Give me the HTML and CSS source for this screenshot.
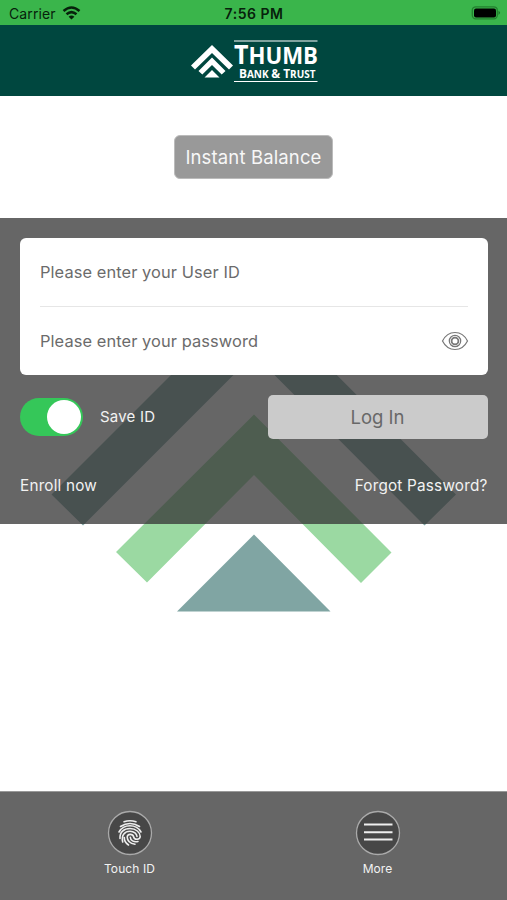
FILE: index.html
```html
<!DOCTYPE html>
<html lang="en">
<head>
<meta charset="utf-8">
<title>Thumb Bank &amp; Trust</title>
<link rel="stylesheet" href="styles.css">
</head>
<body>
<div class="app">
  <svg class="backdrop" viewBox="0 0 507 900" aria-hidden="true">
    <path fill="#80a5a3" d="M254 292 51.500 494.500 83 525.500 254 354.500 424.500 525.500 456 494.500ZM254 534.500 177 611.500H330.500Z"/>
    <path fill="#9bd9a2" d="M254 414.500 116 552 147 582.500 254 475 361 583 391.500 552.500Z"/>
  </svg>
  <div class="status">
    <div class="carrier"><span>Carrier</span>
      <svg width="19" height="14" viewBox="0 0 18 14" fill="none" stroke="#07210b" stroke-width="2.500"><path d="M1 5Q9-2 17 5M4 8.300Q9 3.900 14 8.300"/><path fill="#07210b" stroke="none" d="M9 13.600 6.100 10.700Q9 8.300 11.900 10.700Z"/></svg>
    </div>
    <span class="clock">7:56 PM</span>
    <svg class="battery" width="30" height="14" viewBox="0 0 29 14"><rect x=".8" y=".8" width="25" height="12" rx="3.500" fill="none" stroke="#23802f" stroke-width="1.300"/><rect x="2.500" y="2.500" width="22" height="9" rx="2" fill="#000"/><path d="M27 4.800Q30 6.800 27 9Z" fill="#1c7329"/></svg>
  </div>
  <header class="header">
    <svg width="128" height="44" viewBox="0 0 128 44" fill="#fff">
      <path d="M22 6 1 26.500 5 30.500 22 14 39 30.500 43 26.500ZM22 18.500 8.500 32 12.300 35.500 22 26 31.700 35.500 35.500 32ZM22 31 14.500 38.500H29.500Z"/>
      <path d="M44 1.500H127.500V2.400H44ZM44 42H127.500V42.900H44Z"/>
      <g class="wordmark">
        <text x="44" y="25" textLength="84" lengthAdjust="spacingAndGlyphs"><tspan font-size="27">T</tspan><tspan font-size="24">HUMB</tspan></text>
        <text x="49" y="38.500" textLength="76.500" lengthAdjust="spacingAndGlyphs"><tspan font-size="12.500">B</tspan><tspan font-size="10.500">ANK </tspan><tspan font-size="12.500">&amp; T</tspan><tspan font-size="10.500">RUST</tspan></text>
      </g>
    </svg>
  </header>
  <section class="hero"><button class="balance">Instant Balance</button></section>
  <main class="login">
    <div class="card">
      <div class="field"><span class="user">Please enter your User ID</span></div>
      <div class="field"><span class="pass">Please enter your password</span>
        <svg width="28" height="20" viewBox="0 0 28 20" fill="none" stroke="#777"><path stroke-width="1.200" d="M1.500 10C4.500 4 9 1.500 14 1.500S23.500 4 26.500 10C23.500 16 19 18.500 14 18.500S4.500 16 1.500 10Z"/><circle cx="14" cy="10" r="5.700" stroke-width="1.200"/><circle cx="14" cy="10" r="3.400" stroke-width="1.800"/></svg>
      </div>
    </div>
    <div class="actions">
      <span class="toggle"><span class="knob"></span></span>
      <span class="save">Save ID</span>
      <button class="submit">Log In</button>
    </div>
    <div class="links"><span class="enroll">Enroll now</span><span class="forgot">Forgot Password?</span></div>
  </main>
  <nav class="tabs">
    <div class="tab">
      <svg width="46" height="46" viewBox="0 0 46 46" fill="none" stroke="#eee"><circle cx="23" cy="23" r="21.500" fill="#474747" stroke="#aaa" stroke-width="1.300"/>
        <g stroke-width="1.600" stroke-linecap="round"><path d="M17 11.800Q23 9.800 29 11.800M13.500 16.500Q23 10.500 32.500 16.500M12 22Q15.500 15.800 23 15.800 30.500 15.800 34 22M13 28.500C12.500 22 17 18.500 23 18.500 29 18.500 33.200 22.500 33.200 26.500 33 30 27.300 30.500 26.500 26.500 25.800 23.700 20.400 23.500 20.200 27 20.300 31 23.500 33.600 28 34.200M15.700 32C14 25 18 21.200 23 21.200 27.200 21.200 29.800 24 30 26.500M21.500 35C18.500 33 17.200 30 17.300 27.500M23.300 27.200C23.500 30.500 26.500 32.300 31 31.500"/></g></svg>
      <span class="touch">Touch ID</span>
    </div>
    <div class="tab">
      <svg width="46" height="46" viewBox="0 0 46 46"><circle cx="23" cy="23" r="21.500" fill="#474747" stroke="#aaa" stroke-width="1.300"/><path d="M9 14.500H37.500M9 22.200H37.500M9 29.500H37.500" stroke="#eee" stroke-width="2"/></svg>
      <span class="more">More</span>
    </div>
  </nav>
</div>
</body>
</html>
```
FILE: styles.css
```css
* { box-sizing: border-box; }
body { margin: 0; background: #fff; font-family: Inter, "Liberation Sans", sans-serif; }
button { font: inherit; padding: 0; border: 0; }
svg { display: block; flex: none; }
span, button { white-space: nowrap; }
.app { position: relative; isolation: isolate; width: 507px; height: 900px; display: flex; flex-direction: column; overflow: hidden; }
.backdrop { position: absolute; inset: 0; z-index: -1; width: 507px; height: 900px; }
.status { height: 25px; flex: none; background: #3ab54b; display: grid; grid-template-columns: 1fr auto 1fr; align-items: center; padding: 2px 6px 0 9px; color: #07210b; font-size: 14px; }
.carrier { display: flex; align-items: center; gap: 6px; letter-spacing: .1px; }
.carrier svg { margin-top: -2px; }
.clock { font-weight: 600; font-size: 14px; letter-spacing: .5px; margin-right: 2px; }
.battery { justify-self: end; margin-top: -2px; }
.header { height: 71px; flex: none; background: #00473f; display: flex; justify-content: center; padding-top: 14px; }
.header svg { margin-top: -.5px; }
.wordmark { font-family: "Open Sans", sans-serif; font-weight: 700; }
.hero { height: 122px; flex: none; display: flex; justify-content: center; align-items: flex-start; padding-top: 39px; }
.balance { width: 159px; height: 44px; border-radius: 6px; border: 1px solid #bbb; background: #999; color: #f7f7f7; font-size: 18.5px; letter-spacing: .14px; }
.login { height: 306px; flex: none; background: rgba(55, 55, 55, .764); padding: 20px 19.5px 0 20px; color: #f2f2f2; font-size: 15px; }
.card { height: 137px; border-radius: 6px; background: #fff; padding: 0 19.5px 0 20px; color: #6b6b6b; font-size: 16.4px; letter-spacing: .09px; }
.field { height: 69px; display: flex; align-items: center; justify-content: space-between; }
.user { margin-top: -1px; }
.field + .field { height: 68px; border-top: 1px solid #e6e6e6; margin-top: -1px; }
.field svg { margin-right: -1px; }
.actions { display: flex; align-items: center; height: 45px; margin-top: 19px; }
.toggle { width: 63px; height: 38px; border-radius: 19px; background: #35c759; padding: 2px; display: flex; justify-content: flex-end; }
.knob { width: 34px; height: 34px; border-radius: 50%; background: #fff; }
.save { margin-left: 17px; letter-spacing: .2px; }
.submit { width: 220px; height: 44px; margin-left: auto; border-radius: 5px; background: #cbcbcb; color: #686868; font-size: 18.5px; }
.links { display: flex; justify-content: space-between; margin-top: 37px; line-height: 20px; font-size: 15.3px; letter-spacing: .2px; }
.tabs { height: 109px; flex: none; margin-top: auto; background: #666; border-top: 1px solid #999; display: flex; justify-content: space-between; padding: 18px 105px 0 105px; color: #f2f2f2; font-size: 12px; letter-spacing: .1px; }
.tab { width: 49px; display: flex; flex-direction: column; align-items: center; gap: 5px; }
.tab svg { margin-left: 1px; }
```
